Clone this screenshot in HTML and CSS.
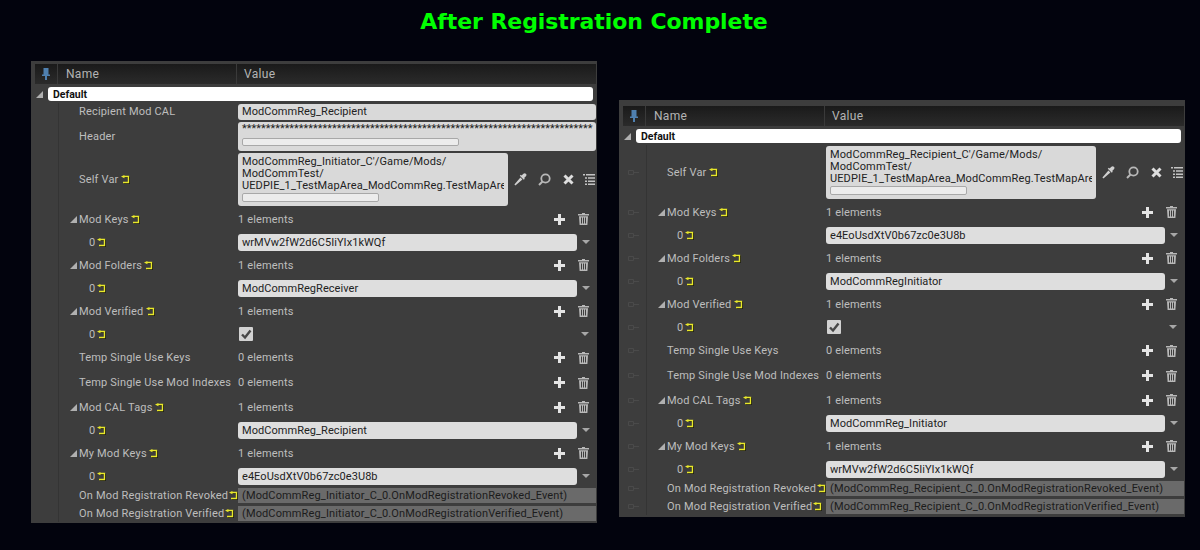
FILE: index.html
```html
<!DOCTYPE html>
<html lang="en">
<head>
  <meta charset="UTF-8" />
  <title>After Registration Complete</title>
  <link rel="stylesheet" href="styles.css">
</head>
<body>
  <svg class="defs" width="0" height="0">
    <symbol id="reset" viewBox="0 0 9 9">
      <path d="M3 1.5h4.5v6H2" fill="none" stroke="#000" stroke-width="1.4" transform="translate(.6 .6)"/>
      <path d="M3 1.5h4.5v6H2" fill="none" stroke="#e8e82a" stroke-width="1.4"/>
      <path d="M0 1.6L3.4 0v3.2z" fill="#e8e82a"/>
    </symbol>
    <symbol id="plus" viewBox="0 0 11 11">
      <path d="M4 0h3v4h4v3H7v4H4V7H0V4h4z" fill="#e4e4e4"/>
    </symbol>
    <symbol id="trash" viewBox="0 0 11 12">
      <path d="M4 0h3v1h4v1.400H0V1h4zM1 3.200h9L9.400 12H1.600zM3 4.500v6h1v-6zM5 4.500v6h1v-6zM7 4.500v6h1v-6z" fill="#b8b8b8" fill-rule="evenodd"/>
    </symbol>
    <symbol id="dropper" viewBox="0 0 13 13">
      <path d="M1 12l-.6-.6 6-7 2 2-7 6zM7.600 2.500l1.800-1.700a1.500 1.500 0 0 1 2.500 2.400l-1.700 1.700.6.800-1 1-4-4 1-1z" fill="#d0d0d0"/>
    </symbol>
    <symbol id="glass" viewBox="0 0 13 13">
      <circle cx="7.500" cy="5.500" r="4.200" fill="none" stroke="#b8b8b8" stroke-width="1.800"/>
      <path d="M4.500 8.500L1 12" stroke="#b8b8b8" stroke-width="2"/>
    </symbol>
    <symbol id="cross" viewBox="0 0 11 11">
      <path d="M1.500 1.500l8 8M9.500 1.500l-8 8" stroke="#dedede" stroke-width="3"/>
    </symbol>
    <symbol id="list" viewBox="0 0 12 11">
      <path d="M0 0h2v1.600H0zM3 0h9v1.600H3zM2 3.200h2v1.600H2zM5 3.200h7v1.600H5zM2 6.400h2V8H2zM5 6.400h7V8H5zM2 9.400h2V11H2zM5 9.400h7V11H5z" fill="#c4c4c4"/>
    </symbol>
    <symbol id="pin" viewBox="0 0 8 12">
      <path d="M1.500 0h5v6.500H8V8H5v4H3V8H0V6.500h1.500z" fill="#4f80b0"/>
    </symbol>
    <symbol id="grip" viewBox="0 0 11 5">
      <path d="M.5.500h5v4h-5zM5.500 2.500H11" fill="none" stroke="#4a4a4a"/>
    </symbol>
    <symbol id="tick" viewBox="0 0 14 14">
      <path d="M3 7.500l3 3 5.500-7" fill="none" stroke="#474747" stroke-width="2.400"/>
    </symbol>
  </svg>

  <h1 class="title">After Registration Complete</h1>

  <div class="panels">
    <!-- recipient -->
    <section class="panel panel-left">
      <div class="head">
        <div class="head-pin"><svg class="ico-pin"><use href="#pin"/></svg></div>
        <div class="head-name">Name</div>
        <div class="head-value">Value</div>
      </div>
      <div class="category"><i class="tri tri-cat"></i><div class="category-bar">Default</div></div>

      <div class="row row-first"><div class="gutter"></div><div class="name">Recipient Mod CAL</div><div class="value"><div class="field field-full">ModCommReg_Recipient</div></div></div>
      <div class="row row-header"><div class="gutter"></div><div class="name">Header</div><div class="value"><div class="field field-full field-scroll"><div class="clip">**************************************************************************</div><div class="scroll scroll-long"></div></div></div></div>
      <div class="row row-self"><div class="gutter"></div><div class="name">Self Var<svg class="ico-reset"><use href="#reset"/></svg></div><div class="value"><div class="field field-obj"><div class="clip-lines">ModCommReg_Initiator_C'/Game/Mods/<br>ModCommTest/<br>UEDPIE_1_TestMapArea_ModCommReg.TestMapArea</div><div class="scroll scroll-short"></div></div><svg class="tool tool-dropper"><use href="#dropper"/></svg><svg class="tool tool-glass"><use href="#glass"/></svg><svg class="tool tool-cross"><use href="#cross"/></svg><svg class="tool tool-list"><use href="#list"/></svg></div></div>

      <div class="row"><div class="gutter"></div><div class="name"><i class="tri"></i>Mod Keys<svg class="ico-reset"><use href="#reset"/></svg></div><div class="value">1 elements<span class="actions"><svg class="act-plus"><use href="#plus"/></svg><svg class="act-trash"><use href="#trash"/></svg></span></div></div>
      <div class="row row-item"><div class="gutter"></div><div class="name name-index">0<svg class="ico-reset"><use href="#reset"/></svg></div><div class="value"><div class="field field-item">wrMVw2fW2d6C5IiYIx1kWQf</div><i class="drop"></i></div></div>
      <div class="row"><div class="gutter"></div><div class="name"><i class="tri"></i>Mod Folders<svg class="ico-reset"><use href="#reset"/></svg></div><div class="value">1 elements<span class="actions"><svg class="act-plus"><use href="#plus"/></svg><svg class="act-trash"><use href="#trash"/></svg></span></div></div>
      <div class="row row-item"><div class="gutter"></div><div class="name name-index">0<svg class="ico-reset"><use href="#reset"/></svg></div><div class="value"><div class="field field-item">ModCommRegReceiver</div><i class="drop"></i></div></div>
      <div class="row"><div class="gutter"></div><div class="name"><i class="tri"></i>Mod Verified<svg class="ico-reset"><use href="#reset"/></svg></div><div class="value">1 elements<span class="actions"><svg class="act-plus"><use href="#plus"/></svg><svg class="act-trash"><use href="#trash"/></svg></span></div></div>
      <div class="row row-item"><div class="gutter"></div><div class="name name-index">0<svg class="ico-reset"><use href="#reset"/></svg></div><div class="value"><div class="check"><svg class="tick"><use href="#tick"/></svg></div><i class="drop drop-check"></i></div></div>
      <div class="row row-tall"><div class="gutter"></div><div class="name">Temp Single Use Keys</div><div class="value">0 elements<span class="actions"><svg class="act-plus"><use href="#plus"/></svg><svg class="act-trash"><use href="#trash"/></svg></span></div></div>
      <div class="row row-tall"><div class="gutter"></div><div class="name">Temp Single Use Mod Indexes</div><div class="value">0 elements<span class="actions"><svg class="act-plus"><use href="#plus"/></svg><svg class="act-trash"><use href="#trash"/></svg></span></div></div>
      <div class="row"><div class="gutter"></div><div class="name"><i class="tri"></i>Mod CAL Tags<svg class="ico-reset"><use href="#reset"/></svg></div><div class="value">1 elements<span class="actions"><svg class="act-plus"><use href="#plus"/></svg><svg class="act-trash"><use href="#trash"/></svg></span></div></div>
      <div class="row row-item"><div class="gutter"></div><div class="name name-index">0<svg class="ico-reset"><use href="#reset"/></svg></div><div class="value"><div class="field field-item">ModCommReg_Recipient</div><i class="drop"></i></div></div>
      <div class="row"><div class="gutter"></div><div class="name"><i class="tri"></i>My Mod Keys<svg class="ico-reset"><use href="#reset"/></svg></div><div class="value">1 elements<span class="actions"><svg class="act-plus"><use href="#plus"/></svg><svg class="act-trash"><use href="#trash"/></svg></span></div></div>
      <div class="row row-item"><div class="gutter"></div><div class="name name-index">0<svg class="ico-reset"><use href="#reset"/></svg></div><div class="value"><div class="field field-item">e4EoUsdXtV0b67zc0e3U8b</div><i class="drop"></i></div></div>
      <div class="row row-event"><div class="gutter"></div><div class="name">On Mod Registration Revoked<svg class="ico-reset ico-tight"><use href="#reset"/></svg></div><div class="value"><div class="event">(ModCommReg_Initiator_C_0.OnModRegistrationRevoked_Event)</div></div></div>
      <div class="row row-event"><div class="gutter"></div><div class="name">On Mod Registration Verified<svg class="ico-reset ico-tight"><use href="#reset"/></svg></div><div class="value"><div class="event">(ModCommReg_Initiator_C_0.OnModRegistrationVerified_Event)</div></div></div>
    </section>

    <!-- initiator -->
    <section class="panel panel-right">
      <div class="head">
        <div class="head-pin"><svg class="ico-pin"><use href="#pin"/></svg></div>
        <div class="head-name">Name</div>
        <div class="head-value">Value</div>
      </div>
      <div class="category"><i class="tri tri-cat"></i><div class="category-bar">Default</div></div>

      <div class="row row-self"><div class="gutter"><svg class="grip"><use href="#grip"/></svg></div><div class="name">Self Var<svg class="ico-reset"><use href="#reset"/></svg></div><div class="value"><div class="field field-obj"><div class="clip-lines">ModCommReg_Recipient_C'/Game/Mods/<br>ModCommTest/<br>UEDPIE_1_TestMapArea_ModCommReg.TestMapArea</div><div class="scroll scroll-short"></div></div><svg class="tool tool-dropper"><use href="#dropper"/></svg><svg class="tool tool-glass"><use href="#glass"/></svg><svg class="tool tool-cross"><use href="#cross"/></svg><svg class="tool tool-list"><use href="#list"/></svg></div></div>

      <div class="row"><div class="gutter"><svg class="grip"><use href="#grip"/></svg></div><div class="name"><i class="tri"></i>Mod Keys<svg class="ico-reset"><use href="#reset"/></svg></div><div class="value">1 elements<span class="actions"><svg class="act-plus"><use href="#plus"/></svg><svg class="act-trash"><use href="#trash"/></svg></span></div></div>
      <div class="row row-item"><div class="gutter"><svg class="grip"><use href="#grip"/></svg></div><div class="name name-index">0<svg class="ico-reset"><use href="#reset"/></svg></div><div class="value"><div class="field field-item">e4EoUsdXtV0b67zc0e3U8b</div><i class="drop"></i></div></div>
      <div class="row"><div class="gutter"><svg class="grip"><use href="#grip"/></svg></div><div class="name"><i class="tri"></i>Mod Folders<svg class="ico-reset"><use href="#reset"/></svg></div><div class="value">1 elements<span class="actions"><svg class="act-plus"><use href="#plus"/></svg><svg class="act-trash"><use href="#trash"/></svg></span></div></div>
      <div class="row row-item"><div class="gutter"><svg class="grip"><use href="#grip"/></svg></div><div class="name name-index">0<svg class="ico-reset"><use href="#reset"/></svg></div><div class="value"><div class="field field-item">ModCommRegInitiator</div><i class="drop"></i></div></div>
      <div class="row"><div class="gutter"><svg class="grip"><use href="#grip"/></svg></div><div class="name"><i class="tri"></i>Mod Verified<svg class="ico-reset"><use href="#reset"/></svg></div><div class="value">1 elements<span class="actions"><svg class="act-plus"><use href="#plus"/></svg><svg class="act-trash"><use href="#trash"/></svg></span></div></div>
      <div class="row row-item"><div class="gutter"><svg class="grip"><use href="#grip"/></svg></div><div class="name name-index">0<svg class="ico-reset"><use href="#reset"/></svg></div><div class="value"><div class="check"><svg class="tick"><use href="#tick"/></svg></div><i class="drop drop-check"></i></div></div>
      <div class="row row-tall"><div class="gutter"><svg class="grip"><use href="#grip"/></svg></div><div class="name">Temp Single Use Keys</div><div class="value">0 elements<span class="actions"><svg class="act-plus"><use href="#plus"/></svg><svg class="act-trash"><use href="#trash"/></svg></span></div></div>
      <div class="row row-tall"><div class="gutter"><svg class="grip"><use href="#grip"/></svg></div><div class="name">Temp Single Use Mod Indexes</div><div class="value">0 elements<span class="actions"><svg class="act-plus"><use href="#plus"/></svg><svg class="act-trash"><use href="#trash"/></svg></span></div></div>
      <div class="row"><div class="gutter"><svg class="grip"><use href="#grip"/></svg></div><div class="name"><i class="tri"></i>Mod CAL Tags<svg class="ico-reset"><use href="#reset"/></svg></div><div class="value">1 elements<span class="actions"><svg class="act-plus"><use href="#plus"/></svg><svg class="act-trash"><use href="#trash"/></svg></span></div></div>
      <div class="row row-item"><div class="gutter"><svg class="grip"><use href="#grip"/></svg></div><div class="name name-index">0<svg class="ico-reset"><use href="#reset"/></svg></div><div class="value"><div class="field field-item">ModCommReg_Initiator</div><i class="drop"></i></div></div>
      <div class="row"><div class="gutter"><svg class="grip"><use href="#grip"/></svg></div><div class="name"><i class="tri"></i>My Mod Keys<svg class="ico-reset"><use href="#reset"/></svg></div><div class="value">1 elements<span class="actions"><svg class="act-plus"><use href="#plus"/></svg><svg class="act-trash"><use href="#trash"/></svg></span></div></div>
      <div class="row row-item"><div class="gutter"><svg class="grip"><use href="#grip"/></svg></div><div class="name name-index">0<svg class="ico-reset"><use href="#reset"/></svg></div><div class="value"><div class="field field-item">wrMVw2fW2d6C5IiYIx1kWQf</div><i class="drop"></i></div></div>
      <div class="row row-event"><div class="gutter"><svg class="grip"><use href="#grip"/></svg></div><div class="name">On Mod Registration Revoked<svg class="ico-reset ico-tight"><use href="#reset"/></svg></div><div class="value"><div class="event">(ModCommReg_Recipient_C_0.OnModRegistrationRevoked_Event)</div></div></div>
      <div class="row row-event"><div class="gutter"><svg class="grip"><use href="#grip"/></svg></div><div class="name">On Mod Registration Verified<svg class="ico-reset ico-tight"><use href="#reset"/></svg></div><div class="value"><div class="event">(ModCommReg_Recipient_C_0.OnModRegistrationVerified_Event)</div></div></div>
    </section>
  </div>
</body>
</html>
```

FILE: styles.css
```css
* {
  margin: 0;
  padding: 0;
  box-sizing: border-box;
}
html, body {
  height: 100%;
  overflow: hidden;
}
body {
  background: #02030d;
  font-family: Roboto, sans-serif;
  font-size: 11px;
  color: #bdbdbd;
}
.defs {
  display: block;
  height: 0;
}
.title {
  height: 61px;
  padding: 7px 12px 0 0;
  text-align: center;
  font-family: "DejaVu Sans", sans-serif;
  font-size: 22px;
  line-height: 30px;
  font-weight: 700;
  letter-spacing: -0.07px;
  color: #00ff00;
}
.panels {
  display: flex;
  align-items: flex-start;
  gap: 22px;
  padding-left: 31px;
}
.panel {
  width: 566px;
  background: #3d3d3d;
}
.panel-left {
  height: 462px;
  padding-top: 3px;
}
.panel-right {
  height: 417px;
  margin-top: 39px;
  padding-top: 6px;
}

/* table head */
.head {
  display: flex;
  height: 20px;
  margin: 0 1px 0 4px;
  background: linear-gradient(#1a1a1a, #2b2b2b);
  font-size: 12px;
  line-height: 20px;
  color: #b4b4b4;
  letter-spacing: 0.3px;
}
.head-pin {
  display: flex;
  justify-content: center;
  align-items: center;
  width: 23px;
  border-right: 1px solid #3a3a3a;
}
.ico-pin {
  width: 8px;
  height: 12px;
}
.head-name {
  width: 179px;
  padding-left: 8px;
  border-right: 1px solid #3a3a3a;
}
.head-value {
  padding-left: 7px;
}

/* category */
.category {
  display: flex;
  align-items: center;
  height: 19px;
  padding: 3px 4px 2px 5px;
}
.category-bar {
  flex: 1;
  height: 14px;
  margin-left: 5px;
  padding: 1px 0 0 5px;
  background: #fff;
  border-radius: 3px;
  font-size: 10.5px;
  line-height: 13px;
  font-weight: 700;
  color: #111;
}
.tri {
  display: inline-block;
  width: 0;
  height: 0;
  margin-right: 2px;
  border-style: solid;
  border-width: 0 0 7px 7px;
  border-color: transparent transparent #b0b0b0 transparent;
}
.tri-cat {
  margin-right: 0;
}

/* rows */
.row {
  display: flex;
  height: 24px;
}
.row-first { height: 18px; }
.row-first .name { padding-bottom: 1px; }
.row-header { height: 31px; }
.row-self { height: 55px; }
.row-item { height: 22px; }
.row-tall { height: 25px; }
.row-event { height: 17.5px; }
.gutter {
  display: flex;
  justify-content: center;
  align-items: center;
  flex: none;
  width: 28px;
  padding-left: 2px;
  border-right: 1px solid #343434;
}
.grip {
  width: 11px;
  height: 5px;
}
.name {
  display: flex;
  align-items: center;
  flex: none;
  width: 179px;
  padding-left: 11px;
  white-space: nowrap;
  letter-spacing: 0.18px;
}
.name:not(:has(.tri)) {
  padding-left: 20px;
}
.name-index:not(:has(.tri)) {
  padding-left: 30px;
}
.ico-reset {
  flex: none;
  width: 9px;
  height: 9px;
  margin-left: 2px;
}
.ico-tight {
  margin-left: 1px;
}
.value {
  display: flex;
  align-items: center;
  flex: 1;
  min-width: 0;
  letter-spacing: 0.15px;
}
.field {
  height: 16px;
  padding: 0 4px;
  background: #d9d9d9;
  border-radius: 3px;
  line-height: 16px;
  letter-spacing: 0.05px;
  color: #222;
  white-space: nowrap;
  overflow: hidden;
}
.field-full {
  width: 358px;
}
.field-item {
  width: 339px;
  height: 17px;
  line-height: 17px;
  background: #dedede;
}
.field-scroll {
  height: 29px;
  line-height: 14px;
}
.field-obj {
  flex: none;
  width: 270px;
  height: 53px;
  padding-top: 3px;
  line-height: 12px;
  letter-spacing: 0.12px;
}
.clip {
  height: 14px;
  letter-spacing: 0;
}
.clip-lines {
  height: 37px;
  width: 262px;
  overflow: hidden;
}
.scroll {
  height: 8px;
  margin-top: 2px;
  background: #ececec;
  border: 1px solid #a8a8a8;
  border-radius: 2px;
}
.scroll-short {
  width: 137px;
  height: 9px;
  margin-top: 0;
}
.scroll-long { width: 217px; }
.tool {
  flex: none;
}
.tool-dropper {
  width: 13px;
  height: 13px;
  margin-left: 6px;
}
.tool-glass {
  width: 13px;
  height: 13px;
  margin-left: 11px;
}
.tool-cross {
  width: 11px;
  height: 11px;
  margin-left: 12px;
}
.tool-list {
  width: 12px;
  height: 11px;
  margin-left: 9px;
}
.actions {
  display: flex;
  align-items: center;
  margin-left: auto;
  padding-right: 8px;
}
.act-plus {
  width: 11px;
  height: 11px;
  margin-right: 13px;
}
.act-trash {
  width: 11px;
  height: 12px;
}
.drop {
  width: 0;
  height: 0;
  margin-left: 5px;
  border-style: solid;
  border-width: 4px 4px 0;
  border-color: #a8a8a8 transparent transparent;
}
.drop-check {
  margin-left: 328px;
}
.check {
  flex: none;
  width: 14px;
  height: 14px;
  margin-left: 1px;
  background: #d2d2d2;
  border-radius: 1px;
}
.tick {
  display: block;
  width: 14px;
  height: 14px;
}
.event {
  width: 358px;
  height: 15px;
  padding-left: 4px;
  background: #6a6a6a;
  line-height: 15px;
  letter-spacing: 0.13px;
  color: #1c1c1c;
  white-space: nowrap;
  overflow: hidden;
}
```
